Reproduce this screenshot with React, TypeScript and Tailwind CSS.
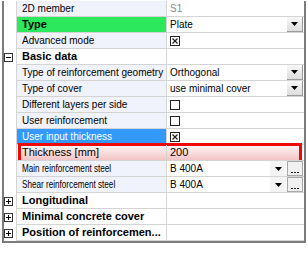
import React from "react";

type Row = {
  name: string;
  cat?: boolean;
  expand?: "minus" | "plus";
  nameBg?: string;
  bold?: boolean;
  condensed?: boolean;
  value?: string;
  valueGray?: boolean;
  control?: "dropdown" | "check" | "uncheck" | "steel";
  highlight?: boolean;
};

const rows: Row[] = [
  { name: "2D member", value: "S1", valueGray: true },
  { name: "Type", bold: true, nameBg: "green", value: "Plate", control: "dropdown" },
  { name: "Advanced mode", control: "check" },
  { name: "Basic data", cat: true, expand: "minus" },
  { name: "Type of reinforcement geometry", value: "Orthogonal", control: "dropdown" },
  { name: "Type of cover", value: "use minimal cover", control: "dropdown" },
  { name: "Different layers per side", control: "uncheck" },
  { name: "User reinforcement", control: "uncheck" },
  { name: "User input thickness", nameBg: "blue", control: "check" },
  { name: "Thickness [mm]", value: "200", highlight: true },
  { name: "Main reinforcement steel", value: "B 400A", control: "steel", condensed: true },
  { name: "Shear reinforcement steel", value: "B 400A", control: "steel", condensed: true },
  { name: "Longitudinal", cat: true, expand: "plus" },
  { name: "Minimal concrete cover", cat: true, expand: "plus" },
  { name: "Position of reinforcemen...", cat: true, expand: "plus" },
];

function Arrow() {
  return (
    <svg width="7" height="4" viewBox="0 0 7 4">
      <polygon points="0,0 7,0 3.5,4" fill="#000" />
    </svg>
  );
}

function CheckBox({ checked }: { checked: boolean }) {
  return (
    <svg width="10" height="10" viewBox="0 0 10 10" className="block">
      <rect x="0.5" y="0.5" width="9" height="9" fill="#fff" stroke="#222" strokeWidth="1" />
      {checked && (
        <path d="M2.5 2.5 L7.5 7.5 M7.5 2.5 L2.5 7.5" stroke="#222" strokeWidth="1.2" />
      )}
    </svg>
  );
}

function ExpandIcon({ kind }: { kind: "minus" | "plus" }) {
  return (
    <svg width="9" height="9" viewBox="0 0 9 9" className="block">
      <rect x="0.5" y="0.5" width="8" height="8" fill="#fff" stroke="#333" strokeWidth="1" />
      <path d="M2 4.5 H7" stroke="#000" strokeWidth="1" />
      {kind === "plus" && <path d="M4.5 2 V7" stroke="#000" strokeWidth="1" />}
    </svg>
  );
}

function PropRow({ r }: { r: Row }) {
  let nameCls = "bg-[#f0f2fc] text-black";
  if (r.nameBg === "green") nameCls = "bg-[#2be85c] text-black";
  if (r.nameBg === "blue") nameCls = "bg-[#3399ff] text-white";
  if (r.cat) nameCls = "bg-white text-black";
  if (r.highlight) nameCls = "bg-transparent text-black";

  const textCls = r.cat
    ? "text-[11px] font-bold"
    : r.bold
    ? "text-[11px] font-bold"
    : r.condensed
    ? "inline-block origin-left scale-x-[0.74] text-[11px]"
    : r.highlight
    ? "text-[11px]"
    : "text-[10px]";

  return (
    <div className="relative flex h-[16px]">
      {r.highlight && (
        <div className="absolute -top-[2px] left-[14px] h-[21px] w-[284px] border-[3px] border-[#ee0808] bg-gradient-to-b from-[#fdf3f3] to-[#f2c0c0]" />
      )}
      <div className="flex w-[12px] shrink-0 items-center bg-white">
        {r.expand && <ExpandIcon kind={r.expand} />}
      </div>
      <div
        className={`relative flex w-[151px] shrink-0 items-center overflow-hidden whitespace-nowrap border-b border-l border-r border-[#d4d4d4] pl-[5px] ${nameCls}`}
      >
        <span className={`relative leading-none ${textCls}`}>{r.name}</span>
      </div>
      <div
        className={`relative flex w-[137px] shrink-0 items-center border-b border-[#d4d4d4] pl-[3px] ${
          r.highlight ? "bg-transparent" : "bg-white"
        }`}
      >
        {r.control === "check" && <CheckBox checked />}
        {r.control === "uncheck" && <CheckBox checked={false} />}
        {r.value && (
          <span
            className={`relative leading-none ${r.highlight ? "text-[11px]" : "text-[10px]"} ${
              r.valueGray ? "text-[#8c8c8c]" : "text-black"
            }`}
          >
            {r.value}
          </span>
        )}
        {r.control === "dropdown" && (
          <div className="absolute right-[1px] top-0 flex h-[15px] w-[16px] items-center justify-center border-b border-r border-[#9a9a9a] border-l-white border-t-white bg-gradient-to-b from-[#f7f7f7] to-[#dedede]">
            <Arrow />
          </div>
        )}
        {r.control === "steel" && (
          <div className="absolute right-[1px] top-0 flex h-[15px] gap-[1px]">
            <div className="flex h-[15px] w-[16px] items-center justify-center bg-[#f4f4f4]">
              <Arrow />
            </div>
            <div className="flex h-[15px] w-[16px] items-end justify-center border border-[#a8a8a8] bg-[#f0f0f0] pb-[2px]">
              <div className="flex gap-[1px]">
                <div className="h-[1px] w-[2px] bg-[#222]" />
                <div className="h-[1px] w-[2px] bg-[#222]" />
                <div className="h-[1px] w-[2px] bg-[#222]" />
              </div>
            </div>
          </div>
        )}
      </div>
    </div>
  );
}

export default function App() {
  return (
    <div
      className="h-[263px] w-[308px] overflow-hidden bg-white pt-[1px]"
      style={{ fontFamily: '"Liberation Sans", Arial, sans-serif' }}
    >
      <div className="ml-[2px] w-[304px] border-b-2 border-l-2 border-r-2 border-[#7c7c7c]">
        {rows.map((r, i) => (
          <PropRow key={i} r={r} />
        ))}
      </div>
    </div>
  );
}
